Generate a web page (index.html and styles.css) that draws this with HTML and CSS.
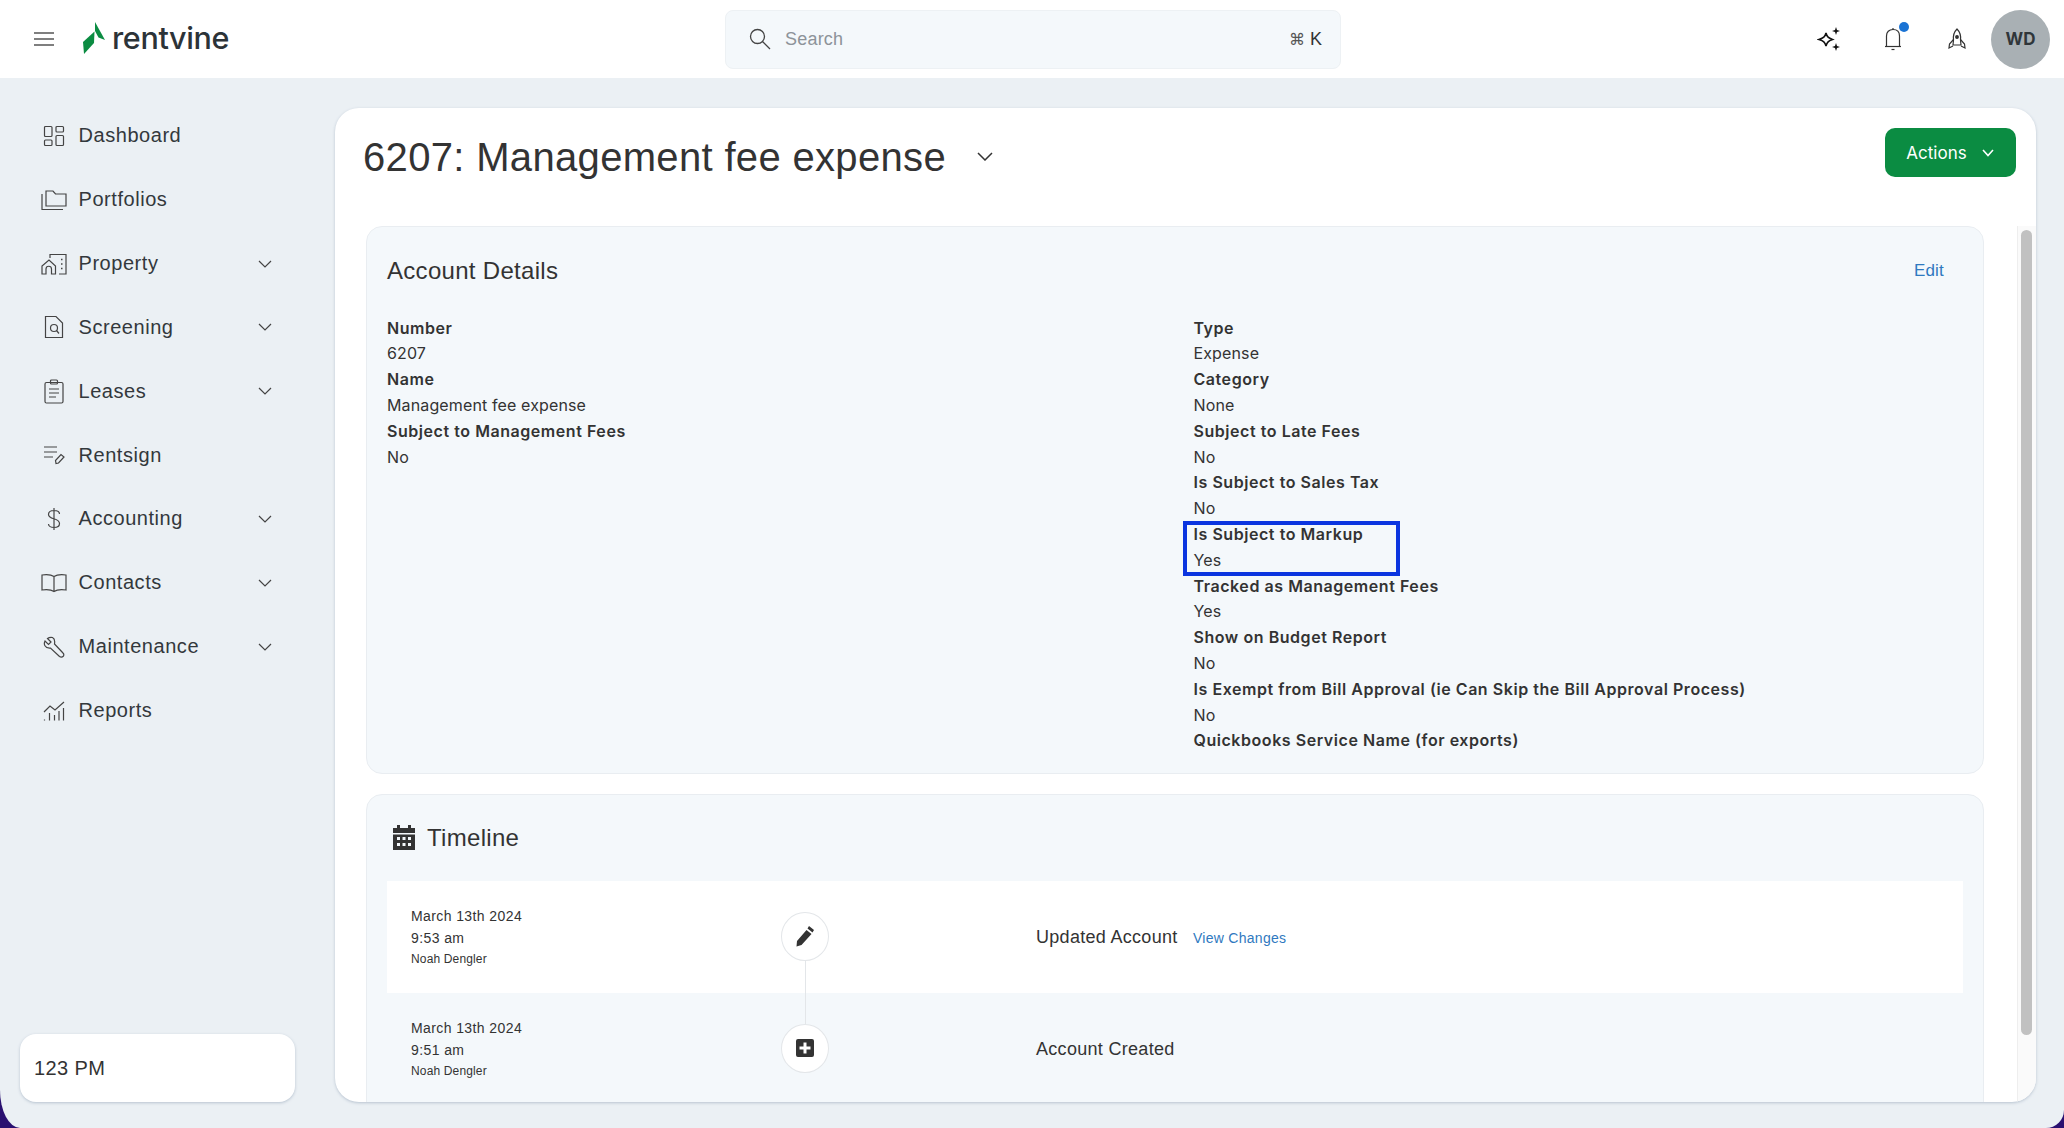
FILE: index.html
```html
<!DOCTYPE html>
<html lang="en">
<head>
<meta charset="utf-8">
<title>Rentvine</title>
<link rel="stylesheet" href="styles.css">
</head>
<body>
<div class="shell">
  <header class="topbar">
    <div class="brand">
      <svg class="burger" width="20" height="14" viewBox="0 0 20 14"><path d="M0 1h20M0 7h20M0 13h20" stroke="#555" stroke-width="1.3" fill="none"/></svg>
      <svg class="logo-mark" width="23" height="32" viewBox="0 0 23 32"><path d="M12 0 L22 18 L15.500 15.500 L12 9 Z" fill="#0b8c42"/><path d="M11.500 9.500 L11 21 L1 32 L0 20 Z" fill="#0b8c42"/></svg>
      <span class="logo-text">rentvine</span>
    </div>
    <div class="search">
      <svg width="22" height="22" viewBox="0 0 22 22" fill="none" stroke="#444" stroke-width="1.3"><circle cx="8.5" cy="8.5" r="7"/><path d="M13.5 13.5 L21 21"/></svg>
      <span class="search-text">Search</span>
      <span class="search-kbd"><span class="cmd">⌘</span> K</span>
    </div>
    <div class="top-actions">
      <svg class="ti-spark" width="24" height="26" viewBox="0 0 24 26" fill="none"><path d="M9 7 C10 11 11.500 12 15.500 13.500 C11.500 15 10 16 9 20 C8 16 6.500 15 2 13.500 C6.500 12 8 11 9 7 Z" stroke="#111" stroke-width="1.600"/><path d="M19 1 L20 4 L23 5 L20 6 L19 9 L18 6 L15 5 L18 4 Z M19 17 L20 20 L23 21 L20 22 L19 25 L18 22 L15 21 L18 20 Z" fill="#111"/></svg>
      <span class="bell">
        <svg width="18" height="24" viewBox="0 0 18 24" fill="none" stroke="#333" stroke-width="1.200"><path d="M2.500 19.500 V9 C2.500 5 5 2.500 9 2.500 C13 2.500 15.500 5 15.500 9 V19.500"/><path d="M1 19.500 H17"/><path d="M7.500 22.500 H10.500"/><path d="M9 1 V2.500"/></svg>
        <span class="dot"></span>
      </span>
      <svg class="ti-rocket" width="18" height="22" viewBox="0 0 18 22" fill="none" stroke="#333" stroke-width="1.200"><path d="M9 1 C12 4 13 8 12.500 12 L13 17 H5 L5.500 12 C5 8 6 4 9 1 Z"/><path d="M5.500 11.500 L1.500 16 L1 20 L5 18"/><path d="M12.500 11.500 L16.500 16 L17 20 L13 18"/><circle cx="9" cy="9" r="1.300" fill="#333"/></svg>
      <span class="avatar">WD</span>
    </div>
  </header>
  <div class="body">
    <aside class="sidebar">
      <nav class="nav">
        <a class="nav-item"><span class="nav-icon"><svg width="22" height="22" viewBox="0 0 22 22" fill="none" stroke="#444" stroke-width="1.200"><rect x="1.500" y="1.500" width="7.500" height="10" rx="1"/><rect x="13" y="1.500" width="7.500" height="5.500" rx="1"/><rect x="1.500" y="15" width="7.500" height="5.500" rx="1"/><rect x="13" y="10.500" width="7.500" height="10" rx="1"/></svg></span><span class="nav-label">Dashboard</span></a>
        <a class="nav-item"><span class="nav-icon"><svg width="26" height="22" viewBox="0 0 26 22" fill="none" stroke="#444" stroke-width="1.200"><path d="M5 17 V2 H12 L14.500 5 H25 V17 Z"/><path d="M1 5 V20.500 H22"/></svg></span><span class="nav-label">Portfolios</span></a>
        <a class="nav-item"><span class="nav-icon"><svg width="26" height="22" viewBox="0 0 26 22" fill="none" stroke="#444" stroke-width="1.200"><path d="M1 21 V13 L8 7 L14.500 13 V21 H10.500 V16 A2.700 2.700 0 0 0 5 16 V21 Z"/><path d="M9 5 V1.500 H25 V21 H18"/><path d="M20 6.500 h1.500M20 11 h1.500M20 15.500 h1.500" stroke-width="1.600"/></svg></span><span class="nav-label">Property</span><svg class="chev" width="14" height="8" viewBox="0 0 14 8"><path d="M1 1 L7 7 L13 1" fill="none" stroke="#444" stroke-width="1.200"/></svg></a>
        <a class="nav-item"><span class="nav-icon"><svg width="20" height="24" viewBox="0 0 20 24" fill="none" stroke="#444" stroke-width="1.200"><path d="M1.500 1.500 H12 L18.500 8 V22.500 H1.500 Z"/><circle cx="10" cy="13" r="3.500"/><path d="M12.500 15.500 L15 18.500"/></svg></span><span class="nav-label">Screening</span><svg class="chev" width="14" height="8" viewBox="0 0 14 8"><path d="M1 1 L7 7 L13 1" fill="none" stroke="#444" stroke-width="1.200"/></svg></a>
        <a class="nav-item"><span class="nav-icon"><svg width="20" height="25" viewBox="0 0 20 25" fill="none" stroke="#444" stroke-width="1.200"><rect x="1" y="3.500" width="18" height="20.500" rx="1.500"/><rect x="6.500" y="1" width="7" height="4" rx="1"/><path d="M5 10 H15 M5 14 H15 M5 18 H12"/></svg></span><span class="nav-label">Leases</span><svg class="chev" width="14" height="8" viewBox="0 0 14 8"><path d="M1 1 L7 7 L13 1" fill="none" stroke="#444" stroke-width="1.200"/></svg></a>
        <a class="nav-item"><span class="nav-icon"><svg width="22" height="20" viewBox="0 0 22 20" fill="none" stroke="#444" stroke-width="1.200"><path d="M1 2 H14 M1 7 H14 M1 12 H10"/><path d="M13 18.500 L12.500 15.500 L18 9.500 L21 12 L15.500 18 Z"/></svg></span><span class="nav-label">Rentsign</span></a>
        <a class="nav-item"><span class="nav-icon"><svg width="14" height="24" viewBox="0 0 14 24" fill="none" stroke="#444" stroke-width="1.200"><path d="M12.500 7 C12.500 4.500 10 3.500 7 3.500 C4 3.500 1.500 5 1.500 7.500 C1.500 13 12.500 10.500 12.500 16.500 C12.500 19 10 20.500 7 20.500 C4 20.500 1.500 19 1.500 17 M7 1 V23"/></svg></span><span class="nav-label">Accounting</span><svg class="chev" width="14" height="8" viewBox="0 0 14 8"><path d="M1 1 L7 7 L13 1" fill="none" stroke="#444" stroke-width="1.200"/></svg></a>
        <a class="nav-item"><span class="nav-icon"><svg width="26" height="20" viewBox="0 0 26 20" fill="none" stroke="#444" stroke-width="1.200"><path d="M13 3.500 C10 1.500 5 1.500 1 2 V17 C5 16.500 10 16.500 13 18.500 C16 16.500 21 16.500 25 17 V2 C21 1.500 16 1.500 13 3.500 Z M13 3.500 V18.500"/></svg></span><span class="nav-label">Contacts</span><svg class="chev" width="14" height="8" viewBox="0 0 14 8"><path d="M1 1 L7 7 L13 1" fill="none" stroke="#444" stroke-width="1.200"/></svg></a>
        <a class="nav-item"><span class="nav-icon"><svg width="22" height="22" viewBox="0 0 22 22" fill="none" stroke="#444" stroke-width="1.200"><path d="M9.500 1.500 C6.500 1 4.500 2.500 4.500 2.500 L8 6 L5.500 8.500 L2 5 C0.500 8 1.500 12.500 7.500 12 L16.500 20.500 C18 21.500 19.500 21 20.500 20 C21 19 21 18 20 17 L11.500 8 C12 5 11.500 2.500 9.500 1.500 Z"/></svg></span><span class="nav-label">Maintenance</span><svg class="chev" width="14" height="8" viewBox="0 0 14 8"><path d="M1 1 L7 7 L13 1" fill="none" stroke="#444" stroke-width="1.200"/></svg></a>
        <a class="nav-item"><span class="nav-icon"><svg width="22" height="20" viewBox="0 0 22 20" fill="none" stroke="#444" stroke-width="1.200"><path d="M1 11 L7 5 L12 9 L21 1"/><path d="M1.500 18.500 V19.500 M6.500 12 V19.500 M11.500 14 V19.500 M16 10 V19.500 M20.500 7 V19.500"/></svg></span><span class="nav-label">Reports</span></a>
      </nav>
      <div class="status-box">123 PM</div>
    </aside>
    <main class="main-card">
      <div class="page-head">
        <h1 class="page-title">6207: Management fee expense</h1>
        <svg class="title-chev" width="16" height="9" viewBox="0 0 16 9"><path d="M1 1 L8 8 L15 1" fill="none" stroke="#333" stroke-width="1.500"/></svg>
        <button class="actions">Actions<svg width="14" height="8" viewBox="0 0 14 8"><path d="M2 1 L7 6.500 L12 1" fill="none" stroke="#fff" stroke-width="1.600"/></svg></button>
      </div>
      <div class="scroll-area">
        <div class="scroll-content">
          <section class="panel details">
            <div class="panel-head">
              <h2 class="panel-title">Account Details</h2>
              <a class="edit">Edit</a>
            </div>
            <div class="fields">
              <dl class="col">
                <dt>Number</dt><dd>6207</dd>
                <dt>Name</dt><dd>Management fee expense</dd>
                <dt>Subject to Management Fees</dt><dd>No</dd>
              </dl>
              <dl class="col">
                <dt>Type</dt><dd>Expense</dd>
                <dt>Category</dt><dd>None</dd>
                <dt>Subject to Late Fees</dt><dd>No</dd>
                <dt>Is Subject to Sales Tax</dt><dd>No</dd>
                <div class="marked"><dt>Is Subject to Markup</dt><dd>Yes</dd><span class="mark-box"></span></div>
                <dt>Tracked as Management Fees</dt><dd>Yes</dd>
                <dt>Show on Budget Report</dt><dd>No</dd>
                <dt>Is Exempt from Bill Approval (ie Can Skip the Bill Approval Process)</dt><dd>No</dd>
                <dt>Quickbooks Service Name (for exports)</dt>
              </dl>
            </div>
          </section>
          <section class="panel timeline">
            <h2 class="panel-title tl-title">
              <svg width="22" height="25" viewBox="0 0 22 25"><path fill="#333" d="M4 0h3v3h8V0h3v3h4v5H0V3h4zM0 9.500h22V25H0zM4 12v3h3v-3zm5.500 0v3h3v-3zM15 12v3h3v-3zM4 18v3h3v-3zm5.500 0v3h3v-3zM15 18v3h3v-3z" fill-rule="evenodd"/></svg>
              Timeline
            </h2>
            <div class="tl-row tl-white">
              <div class="tl-when"><div>March 13th 2024</div><div>9:53 am</div><small>Noah Dengler</small></div>
              <div class="tl-node has-line"><svg width="20" height="22" viewBox="0 0 20 22"><path fill="#333" d="M14 1 L19 5 L17.500 7.500 L12.500 3.500 Z M11.500 5 L16.500 9 L6.500 20 L1.500 21.500 L2 16 Z"/></svg></div>
              <div class="tl-what">Updated Account <a class="tl-link">View Changes</a></div>
            </div>
            <div class="tl-row">
              <div class="tl-when"><div>March 13th 2024</div><div>9:51 am</div><small>Noah Dengler</small></div>
              <div class="tl-node"><svg width="18" height="18" viewBox="0 0 18 18"><path fill="#333" fill-rule="evenodd" d="M2 0h14a2 2 0 0 1 2 2v14a2 2 0 0 1-2 2H2a2 2 0 0 1-2-2V2a2 2 0 0 1 2-2zM7.500 3.500v4h-4v3h4v4h3v-4h4v-3h-4v-4z"/></svg></div>
              <div class="tl-what">Account Created</div>
            </div>
          </section>
        </div>
        <div class="scrollbar"><span class="thumb"></span></div>
      </div>
    </main>
  </div>
</div>
</body>
</html>
```
FILE: styles.css
```css
* { box-sizing: border-box; }
html, body { margin: 0; height: 100%; }
body {
  background: #2a1070;
  font-family: "Liberation Sans", Arial, sans-serif;
  color: #333;
  overflow: hidden;
}
.shell {
  width: 2064px;
  height: 1128px;
  display: flex;
  flex-direction: column;
  background: #ebf0f4;
  border-bottom-left-radius: 20px 38px;
  border-bottom-right-radius: 18px;
  overflow: hidden;
}
.topbar {
  height: 78px;
  flex: none;
  background: #fff;
  display: flex;
  align-items: center;
  position: relative;
  padding-left: 34px;
}
.brand { display: flex; align-items: center; width: 691px; }
.burger { margin-right: 29px; }
.logo-mark { margin-top: -2px; margin-right: 6px; }
.logo-text {
  font-family: Inter, sans-serif;
  font-weight: 500;
  font-size: 30.5px;
  letter-spacing: -0.35px;
  color: #2c3338;
  line-height: 1;
  margin-top: -1px;
}
.search {
  width: 616px;
  height: 59px;
  margin-top: 0;
  background: #f4f8fb;
  border: 1px solid #edf1f4;
  border-radius: 8px;
  display: flex;
  align-items: center;
  padding: 0 18px 0 23px;
}
.search-text { margin-left: 14px; font-size: 18px; color: #8d9399; flex: 1; letter-spacing: 0.2px; }
.search-kbd { font-size: 18px; color: #333; }
.cmd { font-family: "DejaVu Sans", sans-serif; font-size: 16px; color: #555; }
.top-actions { flex: 1; display: flex; align-items: center; padding-left: 476px; }
.ti-spark { margin-right: 43px; }
.bell { position: relative; display: block; width: 18px; height: 24px; margin-right: 46px; }
.bell svg { display: block; }
.dot {
  position: absolute;
  top: -5px;
  right: -7px;
  width: 10px;
  height: 10px;
  border-radius: 50%;
  background: #1a73d4;
}
.ti-rocket { margin-right: 25px; }
.avatar {
  width: 59px;
  height: 59px;
  border-radius: 50%;
  background: #a9b0b4;
  display: flex;
  align-items: center;
  justify-content: center;
  font-family: Inter, sans-serif;
  font-weight: 700;
  font-size: 17px;
  color: #30363a;
}
.body { flex: 1; display: flex; min-height: 0; }
.sidebar {
  width: 335px;
  flex: none;
  display: flex;
  flex-direction: column;
  justify-content: space-between;
  padding: 26px 40px 26px 20px;
}
.nav { display: flex; flex-direction: column; padding-left: 20px; padding-right: 23px; }
.nav-item { height: 63.85px; display: flex; align-items: center; color: #333; }
.nav-icon { width: 28px; margin-right: 10.5px; display: flex; justify-content: center; align-items: center; }
.nav-icon svg { display: block; }
.nav-label { flex: 1; font-size: 20px; letter-spacing: 0.55px; color: #33383c; }
.chev { flex: none; }
.status-box {
  height: 68px;
  width: 275px;
  background: #fff;
  border-radius: 16px;
  box-shadow: 0 1px 3px rgba(120, 140, 165, .45);
  display: flex;
  align-items: center;
  padding-left: 14px;
  font-size: 20px;
  letter-spacing: 0.4px;
  color: #333;
}
.main-card {
  width: 1701px;
  height: 994px;
  margin-top: 30px;
  background: #fff;
  border-radius: 24px;
  box-shadow: 0 1px 3px rgba(120, 140, 165, .45);
  overflow: hidden;
  display: flex;
  flex-direction: column;
}
.page-head {
  height: 118px;
  flex: none;
  display: flex;
  align-items: center;
  padding: 0 20px 0 28px;
}
.page-title {
  margin: 0;
  font-weight: 400;
  font-size: 40px;
  letter-spacing: 0.33px;
  color: #333;
  line-height: 1;
  margin-top: -21px;
}
.title-chev { margin-left: 31px; margin-top: -21px; }
.actions {
  margin-left: auto;
  margin-top: -29px;
  width: 131px;
  height: 49px;
  border: 0;
  border-radius: 10px;
  background: #0b8c42;
  color: #fff;
  font-family: Inter, sans-serif;
  font-size: 17px;
  display: flex;
  align-items: center;
  justify-content: center;
  gap: 14px;
}
.scroll-area { flex: 1; min-height: 0; display: flex; }
.scroll-content { flex: 1; min-width: 0; padding: 0 33px 0 31px; overflow: hidden; }
.scrollbar {
  width: 19px;
  flex: none;
  background: #fafafa;
  border-left: 1px solid #eeeeee;
  padding: 4px 3px 0 3px;
}
.thumb { display: block; width: 11px; height: 805px; border-radius: 6px; background: #c1c1c1; }
.panel {
  background: #f4f8fb;
  border: 1px solid #e9edf1;
  border-radius: 16px;
  padding: 0 20px;
}
.details { height: 548px; }
.panel-head {
  height: 87px;
  display: flex;
  align-items: center;
  justify-content: space-between;
  padding-top: 1px;
  padding-right: 19px;
}
.panel-title { margin: 0; font-weight: 400; font-size: 24px; letter-spacing: 0.3px; color: #333; }
.edit { font-size: 17px; color: #2f79c0; font-family: "Liberation Sans", sans-serif; letter-spacing: 0.2px; }
.fields { display: grid; grid-template-columns: 806.500px 1fr; margin-top: 1.600px; }
.col { margin: 0; font-family: Inter, sans-serif; font-size: 16px; line-height: 25.8px; color: #333; }
.col dt { font-weight: 600; letter-spacing: 0.55px; }
.col dd { margin: 0; font-weight: 400; letter-spacing: 0.13px; }
.marked { position: relative; }
.mark-box {
  position: absolute;
  left: -11px;
  top: -1px;
  width: 217px;
  height: 55px;
  border: 4px solid #0b35e0;
}
.timeline { margin-top: 20px; height: 340px; }
.tl-title {
  height: 86px;
  display: flex;
  align-items: center;
  gap: 12px;
  padding-left: 6px;
  padding-bottom: 1px;
}
.tl-row {
  height: 112px;
  display: flex;
  align-items: center;
  margin: 0;
}
.tl-white { background: #fff; }
.tl-when { width: 394px; padding-left: 24px; font-size: 14px; line-height: 22px; letter-spacing: 0.4px; color: #333; }
.tl-when small { display: block; font-size: 12px; line-height: 20px; letter-spacing: 0.15px; }
.tl-node {
  width: 48px;
  height: 49px;
  flex: none;
  margin-top: -2px;
  border-radius: 50%;
  background: #fff;
  border: 1px solid #e3e6e9;
  display: flex;
  align-items: center;
  justify-content: center;
  position: relative;
  z-index: 1;
}
.has-line::after {
  content: "";
  position: absolute;
  left: 50%;
  top: 48px;
  width: 1px;
  height: 63px;
  background: #e3e6e9;
}
.tl-what { margin-left: 207px; font-size: 18px; letter-spacing: 0.3px; color: #333; }
.tl-link { margin-left: 10px; font-size: 14px; color: #2f79c0; letter-spacing: 0.28px; }
```
